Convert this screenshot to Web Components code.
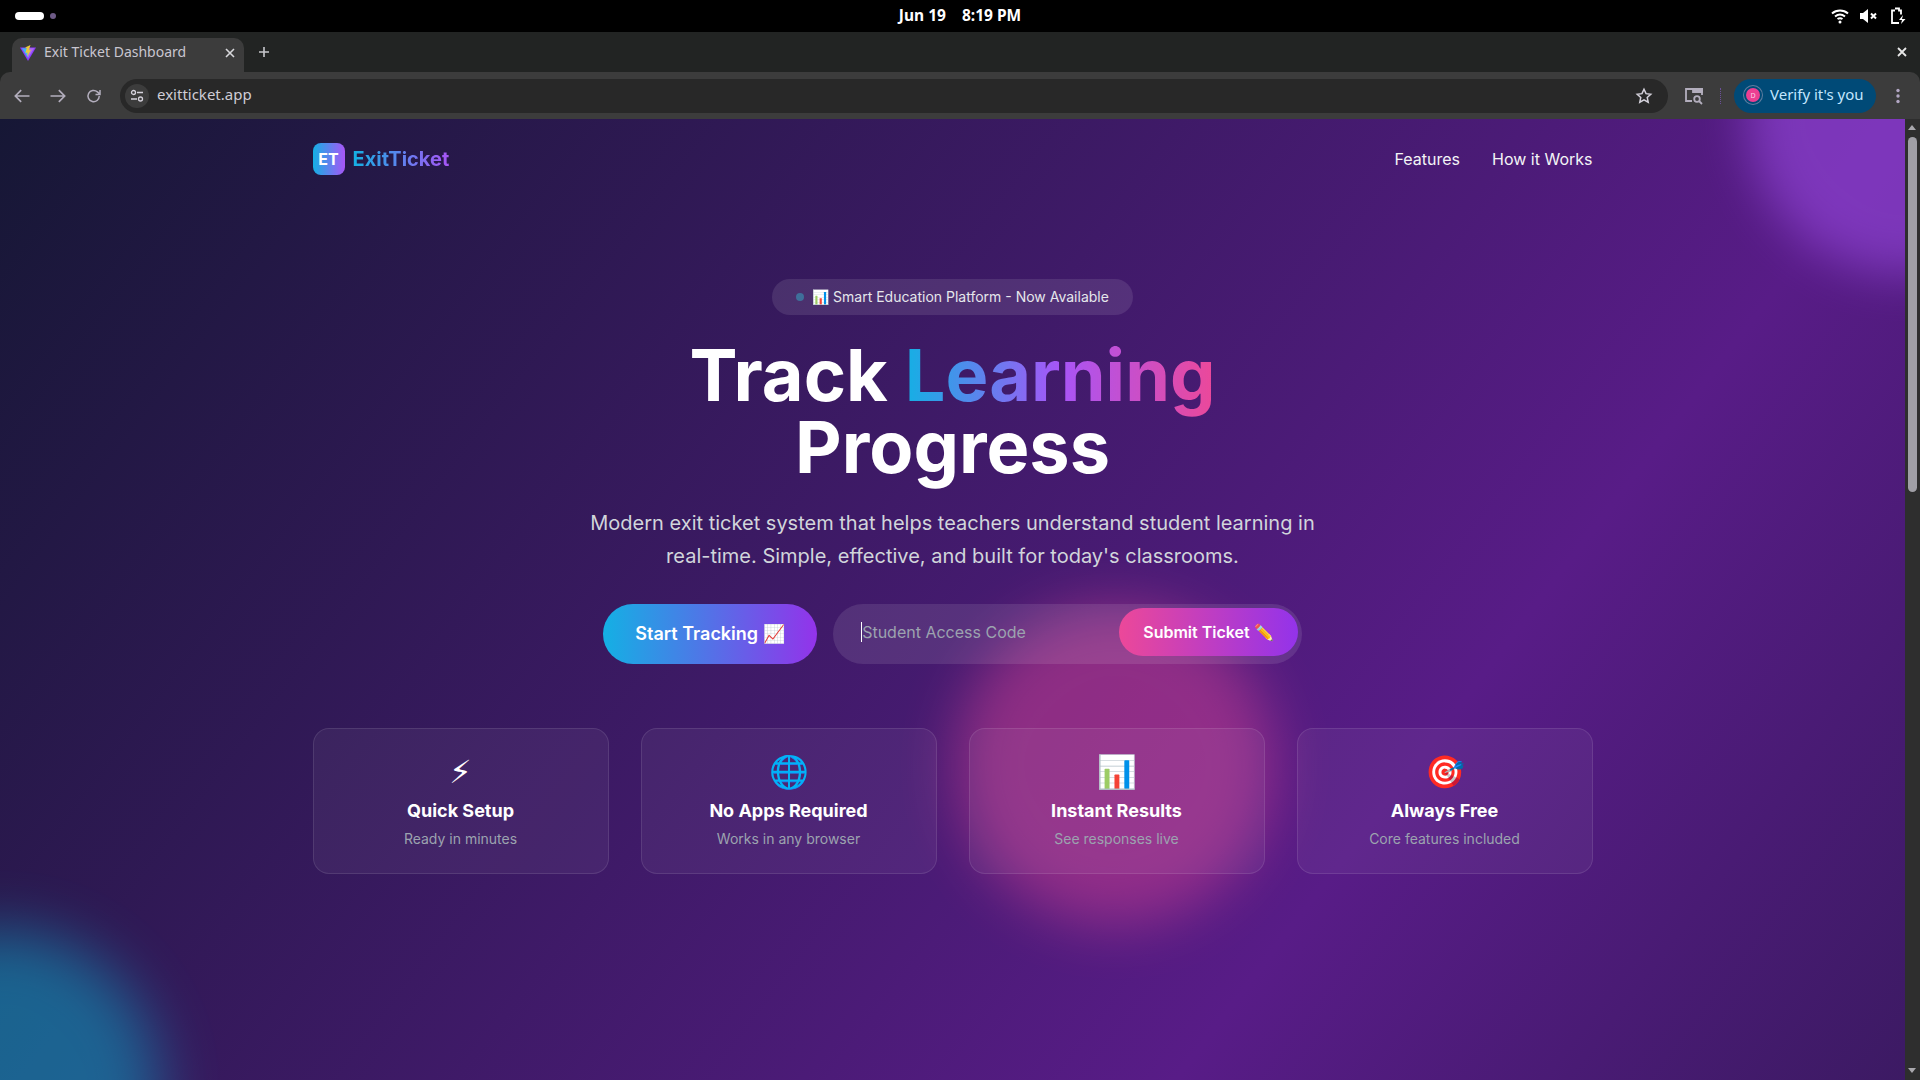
<!DOCTYPE html>
<html lang="en">
<head>
<meta charset="utf-8">
<title>Exit Ticket Dashboard</title>
<style>
  html, body { margin: 0; height: 100%; overflow: hidden; background: #000; }
  body { display: flex; flex-direction: column; height: 1080px; font-family: Inter, "Noto Sans", sans-serif; }
</style>
</head>
<body>
<system-bar></system-bar>
<browser-chrome></browser-chrome>
<landing-page>
  <site-nav></site-nav>
  <hero-section></hero-section>
  <feature-grid>
    <feature-card icon="⚡&#xFE0E;" heading="Quick Setup" text="Ready in minutes" class="bolt"></feature-card>
    <feature-card icon="🌐" heading="No Apps Required" text="Works in any browser"></feature-card>
    <feature-card icon="📊" heading="Instant Results" text="See responses live"></feature-card>
    <feature-card icon="🎯" heading="Always Free" text="Core features included"></feature-card>
  </feature-grid>
</landing-page>

<script>
class SystemBar extends HTMLElement {
  connectedCallback() {
    this.attachShadow({ mode: 'open' });
    this.shadowRoot.innerHTML = `
      <style>
        :host { display: grid; grid-template-columns: 1fr auto 1fr; align-items: center; height: 32px; background: #000; color: #fff; flex: none;
          font: 700 15.500px "Noto Sans", sans-serif; }
        .left { display: flex; align-items: center; gap: 6px; padding-left: 15px; }
        .pill { width: 29px; height: 8px; border-radius: 4px; background: #fff; }
        .dot { width: 6px; height: 6px; border-radius: 50%; background: #6d5a86; }
        .clock { display: flex; gap: 16px; line-height: 30px; height: 32px; }
        .right { display: flex; justify-content: flex-end; align-items: center; gap: 12px; padding-right: 14px; }
        svg { display: block; }
        .mute { margin: 0 1px 0 -1px; }
      </style>
      <div class="left"><span class="pill"></span><span class="dot"></span></div>
      <div class="clock"><span>Jun 19</span><span>8:19 PM</span></div>
      <div class="right">
        <svg width="18" height="16" viewBox="0 0 18 16" fill="none" stroke="#fff" stroke-width="2"><path d="M1 5.500c4.500-4 11.500-4 16 0M4 8.500c3-2.500 7-2.500 10 0M6.500 11c1.500-1 3.500-1 5 0"/><circle cx="9" cy="14" r="1.500" fill="#fff" stroke="none"/></svg>
        <svg class="mute" width="17" height="16" viewBox="0 0 17 16"><path d="M0 5h3l5-4v14l-5-4H0z" fill="#fff"/><path d="M11 5.500l5 5M16 5.500l-5 5" stroke="#fff" stroke-width="2"/></svg>
        <svg width="16" height="18" viewBox="0 0 16 18" fill="none"><path d="M5 1.500h4v2h2v4M9 16H2V3.500h3" stroke="#fff" stroke-width="1.800"/><path d="M13 8l-4 5h3l-1 4 4.500-5H12z" fill="#fff"/></svg>
      </div>`;
  }
}
customElements.define('system-bar', SystemBar);

class BrowserChrome extends HTMLElement {
  connectedCallback() {
    this.attachShadow({ mode: 'open' });
    this.shadowRoot.innerHTML = `
      <style>
        :host { display: block; flex: none; font-family: "Noto Sans", "DejaVu Sans", sans-serif; color: #c7c7cc; background: #222423; }
        .tabs { display: flex; align-items: flex-end; height: 40px; background: #222423; padding-left: 12px; }
        .tab { display: flex; align-items: center; box-sizing: border-box; width: 232px; height: 34px; padding: 0 8px 5px 8px; background: #3c3c3c; border-radius: 10px 10px 0 0; font-size: 14px; color: #c9c6d0; }
        .tab svg { margin-right: 8px; flex: none; }
        .tab span { flex: 1; margin-top: -2px; }
        .plus { margin-left: 14px; margin-bottom: 5px; height: 30px; display: flex; align-items: center; }
        .win-x { margin-left: auto; margin-right: 12px; margin-bottom: 10px; height: 20px; display: flex; align-items: center; }
        .bar { display: flex; align-items: center; height: 47px; background: #3c3c3c; padding-left: 12px; box-sizing: border-box; border-radius: 10px 10px 0 0; }
        .nav { display: flex; gap: 16px; align-items: center; width: 108px; flex: none; }
        .nav svg { flex: none; }
        .reload { margin-left: 1px; }
        .omni { flex: 1; height: 34px; border-radius: 17px; background: #282828; display: flex; align-items: center; padding: 0 15px 0 5px; font-size: 15px; color: #cfcdd6; }
        .tune { width: 24px; height: 24px; border-radius: 50%; background: #3c3c3c; display: flex; align-items: center; justify-content: center; margin-right: 8px; }
        .omni span { flex: 1; margin-top: -4px; }
        .tools { display: flex; align-items: center; padding-left: 16px; flex: none; }
        .sep { width: 1px; height: 16px; margin: 0 13px 0 16px; border-left: 1px dotted #6b4f9a; box-sizing: border-box; }
        .verify { display: flex; align-items: center; box-sizing: border-box; width: 142px; height: 34px; padding-left: 12px; border-radius: 17px; background: #004a77; color: #c2e7ff; font-size: 15px; gap: 10px; }
        .verify .label { margin-top: -4px; }
        .avatar { width: 14px; height: 14px; border-radius: 50%; background: #ec3f92; box-shadow: 0 0 0 2px #004a77, 0 0 0 3px #5f7ea0; display: flex; align-items: center; justify-content: center; font-size: 7px; color: #fbcfe8; margin-top: -1px; }
        .dots { width: 44px; display: flex; justify-content: center; }
      </style>
      <div class="tabs">
        <div class="tab">
          <svg width="16" height="16" viewBox="0 0 16 16"><path d="M0 2.500h16L8 16z" fill="#8b3dff"/><path d="M1.800 3.200h7L8 13z" fill="#41b6f5"/><path d="M8 3.200h6.200L8 13z" fill="#b06bf0"/><path d="M10.500 0L5 2.500l1.700.6L5.500 8l2-.6-.3 4 3.800-6.600-2.200.4z" fill="#e8c93b"/></svg>
          <span>Exit Ticket Dashboard</span>
          <svg style="margin:0" width="12" height="12" viewBox="0 0 12 12" stroke="#d8d8dc" stroke-width="1.600"><path d="M2 2l8 8M10 2l-8 8"/></svg>
        </div>
        <div class="plus"><svg width="12" height="12" viewBox="0 0 12 12" stroke="#c7c7cc" stroke-width="1.600"><path d="M6 1v10M1 6h10"/></svg></div>
        <div class="win-x"><svg width="12" height="12" viewBox="0 0 12 12" stroke="#e8e8e8" stroke-width="1.800"><path d="M2 2l8 8M10 2l-8 8"/></svg></div>
      </div>
      <div class="bar">
        <div class="nav">
          <svg width="20" height="20" viewBox="0 0 24 24" fill="none" stroke="#b3aebd" stroke-width="2"><path d="M21 12H4M11 5l-7 7 7 7"/></svg>
          <svg width="20" height="20" viewBox="0 0 24 24" fill="none" stroke="#b3aebd" stroke-width="2"><path d="M3 12h17M13 5l7 7-7 7"/></svg>
          <svg class="reload" width="18" height="18" viewBox="0 0 24 24" fill="none" stroke="#b3aebd" stroke-width="2"><path d="M19 12a7.500 7.500 0 1 1-2.500-5.500L20 9.500M20 4v6h-6"/></svg>
        </div>
        <div class="omni">
          <div class="tune"><svg width="14" height="14" viewBox="0 0 14 14" fill="none" stroke="#d5d2dc" stroke-width="1.300"><circle cx="3.500" cy="3.500" r="2"/><path d="M7 3.500h6M1 10h6"/><circle cx="10.500" cy="10" r="2"/></svg></div>
          <span>exitticket.app</span>
          <svg width="18" height="18" viewBox="0 0 24 24" fill="none" stroke="#d5d2dc" stroke-width="2"><path d="M12 3l2.700 5.900 6.300.7-4.700 4.300 1.300 6.400L12 17.100 6.400 20.300l1.300-6.400L3 9.600l6.300-.7z"/></svg>
        </div>
        <div class="tools">
          <svg width="20" height="18" viewBox="0 0 20 18" fill="none" stroke="#b3aebd" stroke-width="1.800"><path d="M8 14H2V2h16v6"/><path d="M9 2h9v3H9z" fill="#b3aebd"/><circle cx="13" cy="12" r="2.800"/><path d="M15 14l3 3"/></svg>
          <div class="sep"></div>
          <div class="verify"><span class="avatar">D</span><span class="label">Verify it's you</span></div>
          <div class="dots"><svg width="4" height="16" viewBox="0 0 4 16" fill="#b3a7c4"><circle cx="2" cy="2.500" r="1.700"/><circle cx="2" cy="8" r="1.700"/><circle cx="2" cy="13.500" r="1.700"/></svg></div>
        </div>
      </div>`;
  }
}
customElements.define('browser-chrome', BrowserChrome);

class LandingPage extends HTMLElement {
  connectedCallback() {
    this.attachShadow({ mode: 'open' });
    this.shadowRoot.innerHTML = `
      <style>
        :host { display: flex; flex: 1; min-height: 0; position: relative; overflow: hidden; color: #fff; font-family: Inter, sans-serif;
          background: linear-gradient(to bottom right, #161735, #581c87, #0f172a) 0 0 / 1905px 2510px no-repeat; }
        .blob { position: absolute; width: 320px; height: 320px; border-radius: 50%; filter: blur(24px); opacity: .47; }
        .b1 { left: 1746px; top: -164px; background: #a855f7; }
        .b2 { left: 955px; top: 486px; background: #ec4899; opacity: .42; filter: blur(28px); }
        .b3 { left: -160px; top: 811px; background: #06b6d4; filter: blur(30px); }
        main { position: relative; flex: 1; min-width: 0; display: flex; flex-direction: column; align-items: center; }
        .wrap { width: 1280px; }
        .track { position: relative; width: 15px; flex: none; background: #2e2e2e; display: flex; flex-direction: column; align-items: center; }
        .thumb { width: 9px; height: 355px; margin-top: 18px; background: #a09fa6; border-radius: 5px; }
        .up, .down { position: absolute; left: 3px; width: 0; height: 0; border-left: 4.500px solid transparent; border-right: 4.500px solid transparent; }
        .up { top: 6px; border-bottom: 5px solid #a9a8ad; }
        .down { bottom: 7px; border-top: 5px solid #a9a8ad; }
      </style>
      <div class="blob b1"></div><div class="blob b2"></div><div class="blob b3"></div>
      <main><div class="wrap"><slot></slot></div></main>
      <div class="track"><span class="up"></span><span class="thumb"></span><span class="down"></span></div>`;
  }
}
customElements.define('landing-page', LandingPage);

class SiteNav extends HTMLElement {
  connectedCallback() {
    this.attachShadow({ mode: 'open' });
    this.shadowRoot.innerHTML = `
      <style>
        :host { display: flex; justify-content: space-between; align-items: center; height: 32px; padding-top: 24px; }
        .brand { display: flex; align-items: center; gap: 8px; }
        .mark { width: 32px; height: 32px; border-radius: 8px; background: linear-gradient(90deg, #14b0e4, #a855f7); display: flex; align-items: center; justify-content: center; font-weight: 700; font-size: 16px; color: #fff; }
        .name { font-weight: 700; font-size: 20px; background: linear-gradient(90deg, #14b0e4, #a855f7); -webkit-background-clip: text; background-clip: text; color: transparent; }
        nav { display: flex; gap: 32px; font-weight: 400; font-size: 16px; color: #f3f4f6; }
      </style>
      <div class="brand"><span class="mark">ET</span><span class="name">ExitTicket</span></div>
      <nav><span>Features</span><span>How it Works</span></nav>`;
  }
}
customElements.define('site-nav', SiteNav);

class HeroSection extends HTMLElement {
  connectedCallback() {
    this.attachShadow({ mode: 'open' });
    this.shadowRoot.innerHTML = `
      <style>
        :host { display: flex; flex-direction: column; align-items: center; padding-top: 104px; text-align: center; }
        .badge { display: flex; align-items: center; gap: 8px; height: 36px; padding: 0 24px; border-radius: 18px; background: rgba(255,255,255,.1); font-size: 14px; font-weight: 400; color: #e5e7eb; }
        .badge .txt { margin-top: -1px; }
        .pulse { width: 8px; height: 8px; border-radius: 50%; background: #3f6f9a; }
        h1 { margin: 24px 0 0; font-size: 72px; line-height: 72px; font-weight: 700; }
        .grad { background: linear-gradient(90deg, #14b0e4, #a855f7, #ec4899); -webkit-background-clip: text; background-clip: text; color: transparent; }
        p { margin: 24px 0 0; width: 768px; font-size: 20px; line-height: 33.280px; color: #d1d5db; }
        .cta { display: flex; gap: 16px; margin-top: 30px; }
        .start { display: flex; align-items: center; height: 60px; padding: 0 32.500px; border-radius: 30px; background: linear-gradient(90deg, #14b0e4, #9333ea); font-weight: 600; font-size: 18px; color: #fff; box-sizing: border-box; }
        .code { display: flex; align-items: center; width: 469px; height: 60px; box-sizing: border-box; padding: 4px 4px 8px; border-radius: 30px; background: rgba(255,255,255,.1); }
        .ph { flex: 1; text-align: left; padding-left: 24px; font-size: 16px; color: #9ca3af; display: flex; align-items: center; }
        .caret { width: 1px; height: 20px; background: #fff; }
        .submit { display: flex; align-items: center; height: 48px; padding: 0 24.500px; border-radius: 24px; background: linear-gradient(90deg, #ec4899, #9333ea); font-weight: 600; font-size: 16px; color: #fff; }
      </style>
      <div class="badge"><span class="pulse"></span><span class="txt">📊 Smart Education Platform - Now Available</span></div>
      <h1>Track <span class="grad">Learning</span><br>Progress</h1>
      <p>Modern exit ticket system that helps teachers understand student learning in real-time. Simple, effective, and built for today's classrooms.</p>
      <div class="cta">
        <div class="start">Start Tracking 📈</div>
        <div class="code">
          <div class="ph"><span class="caret"></span>Student Access Code</div>
          <div class="submit">Submit Ticket ✏️</div>
        </div>
      </div>`;
  }
}
customElements.define('hero-section', HeroSection);

class FeatureGrid extends HTMLElement {
  connectedCallback() {
    this.attachShadow({ mode: 'open' });
    this.shadowRoot.innerHTML = `
      <style>
        :host { display: grid; grid-template-columns: repeat(4, 1fr); gap: 32px; margin-top: 64px; }
      </style>
      <slot></slot>`;
  }
}
customElements.define('feature-grid', FeatureGrid);

class FeatureCard extends HTMLElement {
  connectedCallback() {
    this.attachShadow({ mode: 'open' });
    this.shadowRoot.innerHTML = `
      <style>
        :host { display: flex; flex-direction: column; align-items: center; height: 146px; box-sizing: border-box; padding-top: 25px; border: 1px solid rgba(255,255,255,.1); border-radius: 16px; background: rgba(255,255,255,.05); text-align: center; }
        .icon { font-size: 32px; line-height: 36px; height: 36px; }
        :host(.bolt) .icon { font-family: "DejaVu Sans", sans-serif; color: #fff; }
        h3 { margin: 7.500px 0 0; font-size: 18px; line-height: 28px; font-weight: 700; color: #fff; }
        p { margin: 4px 0 0; font-size: 14px; line-height: 20px; color: #9ca3af; }
      </style>
      <div class="icon">${this.getAttribute('icon')}</div>
      <h3>${this.getAttribute('heading')}</h3>
      <p>${this.getAttribute('text')}</p>`;
  }
}
customElements.define('feature-card', FeatureCard);
</script>
</body>
</html>
